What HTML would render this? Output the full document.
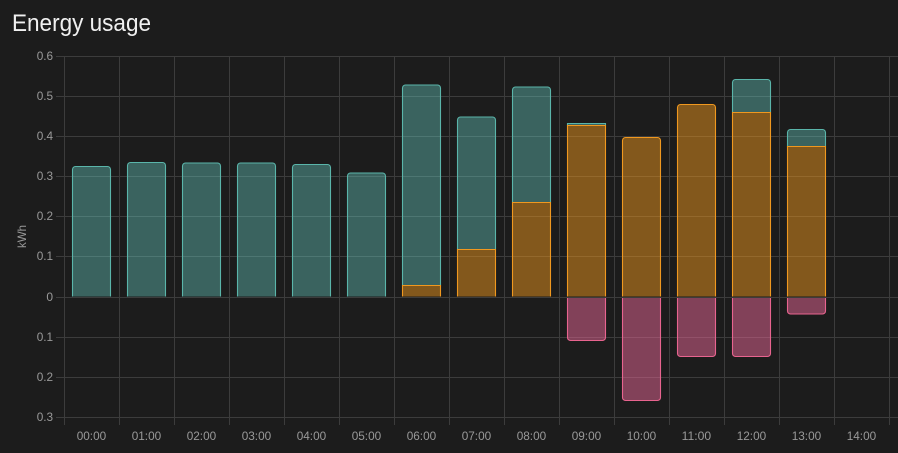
<!DOCTYPE html>
<html><head><meta charset="utf-8"><style>
html,body{margin:0;padding:0;background:#1c1c1c;width:898px;height:453px;overflow:hidden}
svg{display:block}
text{font-family:"Liberation Sans",sans-serif;font-size:12px;fill:#999}
.t{fill:#f0f0f0;font-size:24px}
.g{stroke:#3c3c3c;stroke-width:1;fill:none}
.a{fill:rgba(100,195,185,.43);stroke:#5ab5aa;stroke-width:1.1}
.b{fill:rgba(238,150,28,.49);stroke:#f0981f;stroke-width:1.1}
.c{fill:rgba(236,104,152,.49);stroke:#e8648f;stroke-width:1.1}
</style></head><body>
<svg width="898" height="453" viewBox="0 0 898 453" xmlns="http://www.w3.org/2000/svg">
<text class="t" x="12" y="31" textLength="139" lengthAdjust="spacingAndGlyphs">Energy usage</text>
<path class="g" d="M56 56.5H898M56 96.5H898M56 136.5H898M56 176.5H898M56 216.5H898M56 256.5H898M56 297.5H898M56 337.5H898M56 377.5H898M56 417.5H898"/>
<path class="g" d="M64.5 56V425M119.5 56V425M174.5 56V425M229.5 56V425M284.5 56V425M339.5 56V425M394.5 56V425M449.5 56V425M504.5 56V425M559.5 56V425M614.5 56V425M669.5 56V425M724.5 56V425M779.5 56V425M834.5 56V425M889.5 56V425"/>
<g>
<path class="a" d="M72.5 296.5V169.5a3 3 0 0 1 3-3H107.5a3 3 0 0 1 3 3V296.5"/>
<path class="a" d="M127.5 296.5V165.5a3 3 0 0 1 3-3H162.5a3 3 0 0 1 3 3V296.5"/>
<path class="a" d="M182.5 296.5V166a3 3 0 0 1 3-3H217.5a3 3 0 0 1 3 3V296.5"/>
<path class="a" d="M237.5 296.5V166a3 3 0 0 1 3-3H272.5a3 3 0 0 1 3 3V296.5"/>
<path class="a" d="M292.5 296.5V167.5a3 3 0 0 1 3-3H327.5a3 3 0 0 1 3 3V296.5"/>
<path class="a" d="M347.5 296.5V176a3 3 0 0 1 3-3H382.5a3 3 0 0 1 3 3V296.5"/>
<path class="a" d="M402.5 285.5V88a3 3 0 0 1 3-3H437.5a3 3 0 0 1 3 3V285.5"/>
<path class="b" d="M402.5 296.5V285.5H440.5V296.5"/>
<path class="a" d="M457.5 249.5V120a3 3 0 0 1 3-3H492.5a3 3 0 0 1 3 3V249.5"/>
<path class="b" d="M457.5 296.5V249.5H495.5V296.5"/>
<path class="a" d="M512.5 202.5V90a3 3 0 0 1 3-3H547.5a3 3 0 0 1 3 3V202.5"/>
<path class="b" d="M512.5 296.5V202.5H550.5V296.5"/>
<path class="a" d="M567.5 125.5V123.5H605.5V125.5"/>
<path class="b" d="M567.5 296.5V125.5H605.5V296.5"/>
<path class="b" d="M622.5 296.5V140.5a3 3 0 0 1 3-3H657.5a3 3 0 0 1 3 3V296.5"/>
<path class="b" d="M677.5 296.5V107.5a3 3 0 0 1 3-3H712.5a3 3 0 0 1 3 3V296.5"/>
<path class="a" d="M732.5 112.5V82.5a3 3 0 0 1 3-3H767.5a3 3 0 0 1 3 3V112.5"/>
<path class="b" d="M732.5 296.5V112.5H770.5V296.5"/>
<path class="a" d="M787.5 146.5V132.5a3 3 0 0 1 3-3H822.5a3 3 0 0 1 3 3V146.5"/>
<path class="b" d="M787.5 296.5V146.5H825.5V296.5"/>
<path class="c" d="M567.5 298V337.5a3 3 0 0 0 3 3H602.5a3 3 0 0 0 3-3V298"/>
<path class="c" d="M622.5 298V397.5a3 3 0 0 0 3 3H657.5a3 3 0 0 0 3-3V298"/>
<path class="c" d="M677.5 298V353.5a3 3 0 0 0 3 3H712.5a3 3 0 0 0 3-3V298"/>
<path class="c" d="M732.5 298V353.5a3 3 0 0 0 3 3H767.5a3 3 0 0 0 3-3V298"/>
<path class="c" d="M787.5 298V311a3 3 0 0 0 3 3H822.5a3 3 0 0 0 3-3V298"/>
</g>
<g>
<text x="36.7" y="60" textLength="16.4" lengthAdjust="spacingAndGlyphs">0.6</text>
<text x="36.7" y="100" textLength="16.4" lengthAdjust="spacingAndGlyphs">0.5</text>
<text x="36.7" y="140" textLength="16.4" lengthAdjust="spacingAndGlyphs">0.4</text>
<text x="36.7" y="180" textLength="16.4" lengthAdjust="spacingAndGlyphs">0.3</text>
<text x="36.7" y="220" textLength="16.4" lengthAdjust="spacingAndGlyphs">0.2</text>
<text x="36.7" y="260" textLength="16.4" lengthAdjust="spacingAndGlyphs">0.1</text>
<text x="46.4" y="301" textLength="6.7" lengthAdjust="spacingAndGlyphs">0</text>
<text x="36.7" y="341" textLength="16.4" lengthAdjust="spacingAndGlyphs">0.1</text>
<text x="36.7" y="381" textLength="16.4" lengthAdjust="spacingAndGlyphs">0.2</text>
<text x="36.7" y="421" textLength="16.4" lengthAdjust="spacingAndGlyphs">0.3</text>
</g>
<text x="26" y="248" transform="rotate(-90 26 248)" textLength="23" lengthAdjust="spacingAndGlyphs">kWh</text>
<g>
<text x="76.7" y="440" textLength="29.5" lengthAdjust="spacingAndGlyphs">00:00</text>
<text x="131.7" y="440" textLength="29.5" lengthAdjust="spacingAndGlyphs">01:00</text>
<text x="186.7" y="440" textLength="29.5" lengthAdjust="spacingAndGlyphs">02:00</text>
<text x="241.7" y="440" textLength="29.5" lengthAdjust="spacingAndGlyphs">03:00</text>
<text x="296.7" y="440" textLength="29.5" lengthAdjust="spacingAndGlyphs">04:00</text>
<text x="351.7" y="440" textLength="29.5" lengthAdjust="spacingAndGlyphs">05:00</text>
<text x="406.7" y="440" textLength="29.5" lengthAdjust="spacingAndGlyphs">06:00</text>
<text x="461.7" y="440" textLength="29.5" lengthAdjust="spacingAndGlyphs">07:00</text>
<text x="516.7" y="440" textLength="29.5" lengthAdjust="spacingAndGlyphs">08:00</text>
<text x="571.7" y="440" textLength="29.5" lengthAdjust="spacingAndGlyphs">09:00</text>
<text x="626.7" y="440" textLength="29.5" lengthAdjust="spacingAndGlyphs">10:00</text>
<text x="681.7" y="440" textLength="29.5" lengthAdjust="spacingAndGlyphs">11:00</text>
<text x="736.7" y="440" textLength="29.5" lengthAdjust="spacingAndGlyphs">12:00</text>
<text x="791.7" y="440" textLength="29.5" lengthAdjust="spacingAndGlyphs">13:00</text>
<text x="846.7" y="440" textLength="29.5" lengthAdjust="spacingAndGlyphs">14:00</text>
</g>
</svg>
</body></html>
